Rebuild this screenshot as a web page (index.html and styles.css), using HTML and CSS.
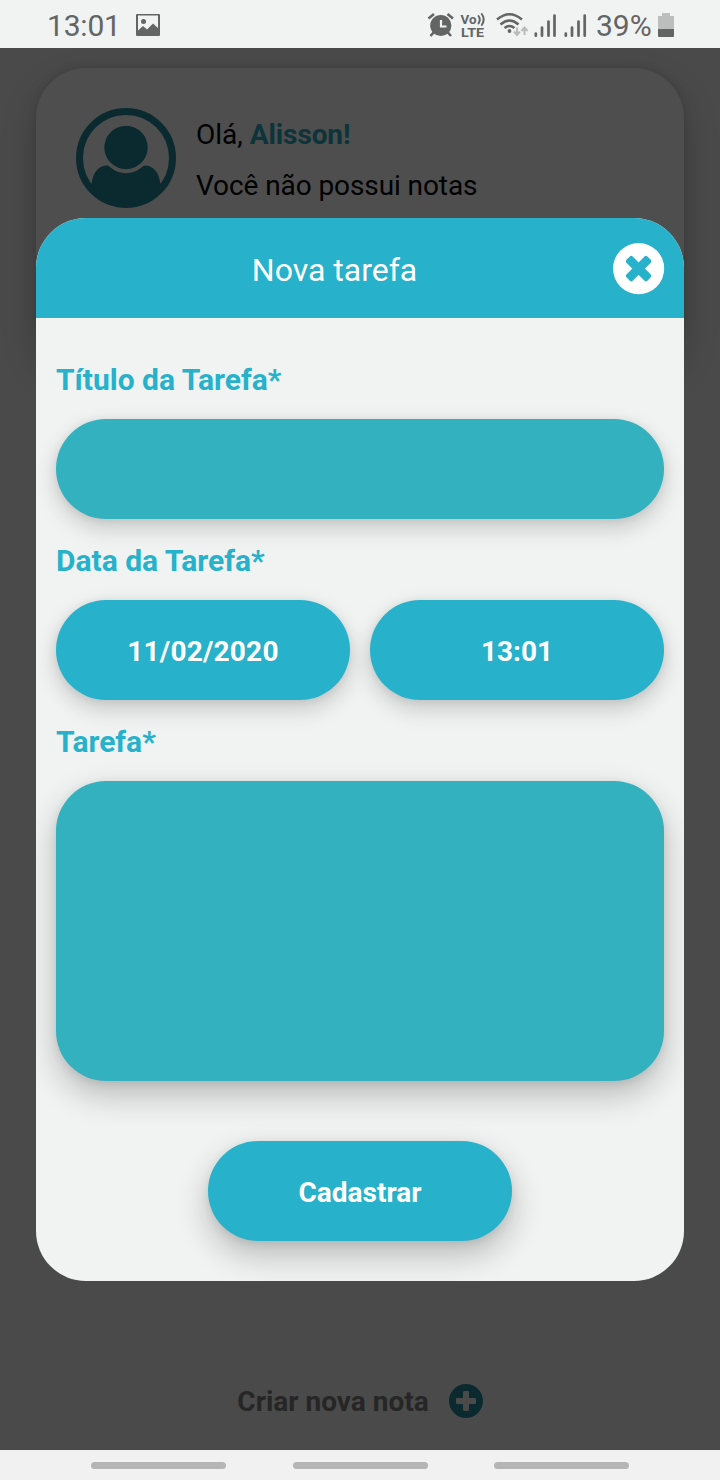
FILE: index.html
```html
<!DOCTYPE html>
<html lang="pt-BR">
<head>
<meta charset="utf-8">
<title>Nova tarefa</title>
<link rel="stylesheet" href="styles.css">
</head>
<body>
<div class="phone">
  <header class="status">
    <span class="clock">13:01</span>
    <svg class="gallery" width="24" height="22" viewBox="0 0 24 22"><path fill="#636464" fill-rule="evenodd" d="M1 0H23Q24 0 24 1V21Q24 22 23 22H1Q0 22 0 21V1Q0 0 1 0ZM2 1.500V16.500L7 12L11 15.500L17 9.500L22 14V1.500ZM7.500 5A2.500 2.500 0 1 1 7.500 10A2.500 2.500 0 1 1 7.500 5Z"/></svg>
    <span class="spacer"></span>
    <svg class="indicators" width="166" height="48" viewBox="426 0 166 48">
      <g fill="none" stroke="#636464" stroke-width="2.600">
        <path d="M428.500 18.500L434 14M447.500 14L453 18.500M434 32L430.500 36M447.500 32L451 36"/>
        <circle cx="440.800" cy="25.500" r="10.600" fill="#636464" stroke="none"/>
        <path d="M441 20V26.500H446.500" stroke="#f1f3f3" stroke-width="2.200"/>
      </g>
      <g class="volte"><text x="460.500" y="23.500" textLength="16" lengthAdjust="spacingAndGlyphs">Vo</text><text x="461" y="36.700" textLength="23" lengthAdjust="spacingAndGlyphs">LTE</text></g>
      <g fill="none" stroke="#636464" stroke-width="1.900" stroke-linecap="round"><path d="M478.500 16Q481 19.500 478.500 23.500M481.800 14Q485.500 19.500 481.800 25"/></g>
      <g fill="none" stroke="#636464" stroke-width="2.500"><path d="M497 19.500Q509.500 9 522 19.500M500.500 24.500Q509.500 16.500 518.500 24.500M504.500 28Q509.500 24 514.500 28"/></g>
      <circle cx="509.500" cy="31" r="1.900" fill="#636464"/>
      <path d="M517 27.500V34M514 31.500L517 35L520 31.500M524.500 35V28.500M521.500 31L524.500 27.500L527.500 31" stroke="#b9bbbb" stroke-width="2" fill="none"/>
      <path d="M535.800 33.500V35.700M542 27.500V35.700M548.500 21.500V35.700M554.500 15.500V35.700M565.800 33.500V35.700M572 27.500V35.700M578.500 21.500V35.700M584.700 15.500V35.700" stroke="#636464" stroke-width="2.700" stroke-linecap="round"/>
    </svg>
    <span class="percent">39%</span>
    <svg class="battery" width="16" height="24" viewBox="0 0 16 24"><path d="M4 0H12V3H16V16H0V3H4Z" fill="#bcbdbd"/><path d="M0 16H16V23Q16 24 15 24H1Q0 24 0 23Z" fill="#636464"/></svg>
  </header>

  <main class="screen">
    <section class="profile">
      <svg class="avatar" width="100" height="100" viewBox="0 0 100 100" fill="#0b2a2f">
        <circle cx="50" cy="50" r="46.500" fill="none" stroke="#0b2a2f" stroke-width="7"/>
        <circle cx="50" cy="39.500" r="21.700"/>
        <path d="M15.500 76C17 64 23 57.500 31 57.500Q33 57.500 34 59C43 67.300 57 67.300 66 59Q67 57.500 69 57.500C77 57.500 83 64 84.500 76L86.500 78A46 46 0 0 1 13.500 78Z"/>
      </svg>
      <div class="greeting">
        <p>Olá, <strong>Alisson!</strong></p>
        <p class="summary">Você não possui notas</p>
      </div>
    </section>
    <div class="create">
      <span>Criar nova nota</span>
      <svg width="34" height="34" viewBox="0 0 34 34"><circle cx="17" cy="17" r="17" fill="#0b2a2f"/><path d="M15.200 7H18.800Q20 7 20 8.200V14H25.800Q27 14 27 15.200V18.800Q27 20 25.800 20H20V25.800Q20 27 18.800 27H15.200Q14 27 14 25.800V20H8.200Q7 20 7 18.800V15.200Q7 14 8.200 14H14V8.200Q14 7 15.200 7Z" fill="#4a4a4a"/></svg>
    </div>

    <section class="modal">
      <header class="modal-head">
        <h1>Nova tarefa</h1>
        <svg class="close" width="52" height="52" viewBox="0 0 52 52"><circle cx="25.600" cy="25.600" r="25.600" fill="#fff"/><g fill="#27b1ca" transform="rotate(45 25.600 25.600)"><rect x="10.800" y="21.200" width="29.600" height="8.800" rx="2"/><rect x="21.200" y="10.800" width="8.800" height="29.600" rx="2"/></g></svg>
      </header>
      <form class="form">
        <label>Título da Tarefa*</label>
        <div class="field"></div>
        <label>Data da Tarefa*</label>
        <div class="dates">
          <button type="button"><span class="date">11/02/2020</span></button>
          <button type="button">13:01</button>
        </div>
        <label>Tarefa*</label>
        <div class="field area"></div>
        <button type="button" class="submit">Cadastrar</button>
      </form>
    </section>
  </main>

  <footer class="nav"><i></i><i></i><i></i></footer>
</div>
</body>
</html>
```
FILE: styles.css
```css
* { box-sizing: border-box; }
body { margin: 0; font-family: Roboto, sans-serif; }
p, h1 { margin: 0; }
svg { display: block; flex: none; }
.phone { width: 720px; height: 1480px; display: flex; flex-direction: column; overflow: hidden; }

.status { height: 48px; flex: none; display: flex; align-items: center; background: #f1f3f3; color: #636464; padding: 0 46px; font-size: 30px; font-weight: 400; line-height: 48px; }
.clock { width: 90px; padding: 4px 0 0 1px; letter-spacing: -.2px; white-space: nowrap; }
.gallery { margin-top: 2px; }
.spacer { flex: 1; }
.indicators { margin-right: 4px; }
.volte { font-family: Roboto, sans-serif; font-size: 13.5px; font-weight: 700; fill: #636464; }
.percent { width: 62px; padding-top: 4px; white-space: nowrap; }
.battery { margin-top: 2px; }

.screen { position: relative; flex: 1; display: flex; flex-direction: column; justify-content: space-between; padding: 20px 36px 32px; background: #4a4a4a; }
.profile { display: flex; gap: 20px; height: 300px; padding: 40px; border-radius: 50px; background: #4e4e4e; box-shadow: 0 14px 36px rgba(0, 0, 0, .2), 0 0 8px rgba(0, 0, 0, .1); }
.greeting { padding-top: 1px; font-size: 28px; line-height: 51px; color: #000; }
.greeting strong { color: #0d343b; letter-spacing: -.1px; }
.summary { letter-spacing: -.09px; }
.create { display: flex; align-items: center; justify-content: center; gap: 20px; height: 34px; font-size: 28px; font-weight: 700; line-height: 34px; color: #262626; }
.create span { padding-top: 2px; }

.modal { position: absolute; left: 36px; right: 36px; top: 170px; height: 1063px; border-radius: 50px; overflow: hidden; background: #f1f3f3; }
.modal-head { display: flex; align-items: center; height: 100px; padding: 2px 19px 0 0; background: #27b1ca; color: #fff; }
.modal-head h1 { flex: 1; padding: 2px 0 0 20px; text-align: center; font-size: 32px; font-weight: 400; line-height: 40px; }
.form { display: flex; flex-direction: column; padding: 41px 20px 40px; }
label { position: relative; z-index: 1; font-size: 30px; font-weight: 700; line-height: 41px; margin-bottom: 19px; color: #27b1ca; }
.field { height: 100px; margin-bottom: 21px; border-radius: 50px; background: #33b1bf; box-shadow: 0 9px 22px rgba(0, 0, 0, .18), 0 1px 8px rgba(0, 0, 0, .07); }
.area { height: 300px; margin-bottom: 60px; box-shadow: 0 14px 32px rgba(0, 0, 0, .24), 0 2px 10px rgba(0, 0, 0, .08); }
.dates { display: grid; grid-template-columns: 1fr 1fr; gap: 20px; margin-bottom: 21px; }
button { height: 100px; border: 0; border-radius: 50px; padding: 3px 0 0; background: #27b1ca; color: #fff; font: 700 28px/36px Roboto, sans-serif; box-shadow: 0 9px 22px rgba(0, 0, 0, .18), 0 1px 8px rgba(0, 0, 0, .07); }
.date { letter-spacing: .2px; }
.submit { width: 304px; align-self: center; box-shadow: 0 14px 32px rgba(0, 0, 0, .24), 0 2px 10px rgba(0, 0, 0, .08); }

.nav { height: 30px; flex: none; display: flex; align-items: center; justify-content: space-between; padding: 0 91px; background: #f1f1f1; }
.nav i { width: 135px; height: 7px; border-radius: 4px; background: #b5b5b5; }
```
